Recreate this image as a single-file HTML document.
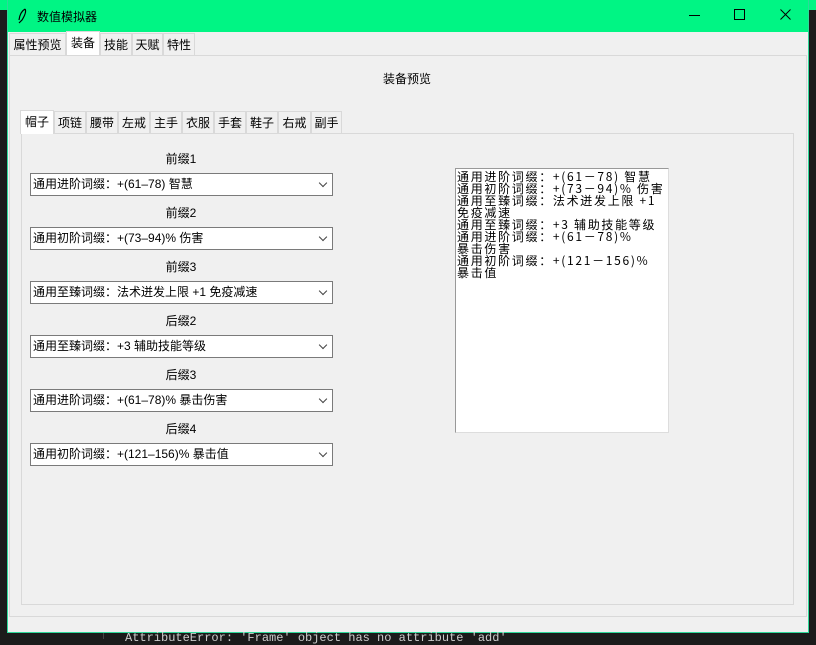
<!DOCTYPE html>
<html><head><meta charset="utf-8"><style>
*{margin:0;padding:0;box-sizing:border-box}
body{width:816px;height:639px;background:#1b1b1b;position:relative;overflow:hidden;font-family:"Liberation Sans","Microsoft YaHei","Noto Sans CJK SC",sans-serif;font-size:12px;color:#000}
.win{position:absolute;left:7px;top:0;width:802px;height:633px;background:#f0f0f0;border:1px solid #2ed99a;border-top:none}
.title{position:absolute;left:0;top:0;width:100%;height:32px;background:#00f584}
.title span{position:absolute;left:29px;top:8px;font-size:12px}
.abs{position:absolute}
.tab{position:absolute;height:22px;border:1px solid #d9d9d9;border-bottom:none;background:#f0f0f0;font-size:12px;text-align:center;line-height:22px}
.tab.sel{background:#fff;height:24px;border-color:#d9d9d9}
.frame{position:absolute;border:1px solid #d9d9d9;background:#f0f0f0}
.lbl{position:absolute;width:302px;text-align:center;font-size:12px}
.cb{position:absolute;width:303px;height:23px;background:#fff;border:1px solid #7a7a7a;font-size:12px;line-height:20px;padding-left:2px}
.cb:after{content:"";position:absolute;right:6px;top:6px;width:5px;height:5px;border-right:1px solid #444;border-bottom:1px solid #444;transform:rotate(45deg)}
.txt{position:absolute;top:168px;width:214px;height:265px;background:#fff;border:1px solid #999;border-right-color:#ddd;border-bottom-color:#ddd;font-family:"WenQuanYi Zen Hei","Noto Sans CJK SC",monospace;font-size:12px;line-height:12px;padding:2px 1px;letter-spacing:1.7px;white-space:pre}
</style></head><body>
<div class="abs" style="left:0;top:0;width:816px;height:10px;background:#00f584"></div>
<div class="win">
 <div class="title"><span>数值模拟器</span>
  <svg class="abs" style="left:8px;top:8px" width="12" height="16"><path d="M9 1 Q11 4 6 12 L3 15 M9 1 Q4 4 3 12" stroke="#000" fill="none" stroke-width="1.2"/></svg>
  <svg class="abs" style="left:681px;top:9px" width="12" height="12"><path d="M0 6.5H11" stroke="#000"/></svg>
  <svg class="abs" style="left:726px;top:9px" width="12" height="12"><rect x="0.5" y="0.5" width="10" height="10" stroke="#000" fill="none"/></svg>
  <svg class="abs" style="left:772px;top:9px" width="12" height="12"><path d="M0.5 0.5L10.5 10.5M10.5 0.5L0.5 10.5" stroke="#000"/></svg>
 </div>
 <div class="frame" style="left:1px;top:55px;width:798px;height:562px"></div>
 <div class="tab" style="left:1px;top:33px;width:57px">属性预览</div>
 <div class="tab sel" style="left:58px;top:31px;width:34px;border-bottom:none">装备</div>
 <div class="tab" style="left:92px;top:33px;width:32px">技能</div>
 <div class="tab" style="left:124px;top:33px;width:31px">天赋</div>
 <div class="tab" style="left:155px;top:33px;width:32px">特性</div>
 <div class="abs" style="left:375px;top:70px">装备预览</div>
 <div class="frame" style="left:13px;top:133px;width:773px;height:472px"></div>
 <div class="tab sel" style="left:12px;top:110px;width:34px">帽子</div>
 <div class="tab" style="left:46px;top:111px;width:32px">项链</div>
 <div class="tab" style="left:78px;top:111px;width:32px">腰带</div>
 <div class="tab" style="left:110px;top:111px;width:32px">左戒</div>
 <div class="tab" style="left:142px;top:111px;width:32px">主手</div>
 <div class="tab" style="left:174px;top:111px;width:32px">衣服</div>
 <div class="tab" style="left:206px;top:111px;width:32px">手套</div>
 <div class="tab" style="left:238px;top:111px;width:32px">鞋子</div>
 <div class="tab" style="left:270px;top:111px;width:33px">右戒</div>
 <div class="tab" style="left:303px;top:111px;width:31px">副手</div>
 <div class="lbl" style="left:22px;top:150px">前缀1</div>
 <div class="cb" style="left:22px;top:173px">通用进阶词缀：+(61–78) 智慧</div>
 <div class="lbl" style="left:22px;top:204px">前缀2</div>
 <div class="cb" style="left:22px;top:227px">通用初阶词缀：+(73–94)% 伤害</div>
 <div class="lbl" style="left:22px;top:258px">前缀3</div>
 <div class="cb" style="left:22px;top:281px">通用至臻词缀：法术迸发上限 +1 免疫减速</div>
 <div class="lbl" style="left:22px;top:312px">后缀2</div>
 <div class="cb" style="left:22px;top:335px">通用至臻词缀：+3 辅助技能等级</div>
 <div class="lbl" style="left:22px;top:366px">后缀3</div>
 <div class="cb" style="left:22px;top:389px">通用进阶词缀：+(61–78)% 暴击伤害</div>
 <div class="lbl" style="left:22px;top:420px">后缀4</div>
 <div class="cb" style="left:22px;top:443px">通用初阶词缀：+(121–156)% 暴击值</div>
 <div class="txt" style="left:447px">通用进阶词缀：+(61－78) 智慧
通用初阶词缀：+(73－94)% 伤害
通用至臻词缀：法术迸发上限 +1
免疫减速
通用至臻词缀：+3 辅助技能等级
通用进阶词缀：+(61－78)%
暴击伤害
通用初阶词缀：+(121－156)%
暴击值</div>
</div>
<div class="abs" style="left:103px;top:633px;width:1px;height:6px;background:#444"></div>
<div class="abs" style="left:125px;top:632px;color:#ccc;font-family:'Liberation Mono',monospace;font-size:12px;line-height:12px">AttributeError: 'Frame' object has no attribute 'add'</div>
</body></html>
